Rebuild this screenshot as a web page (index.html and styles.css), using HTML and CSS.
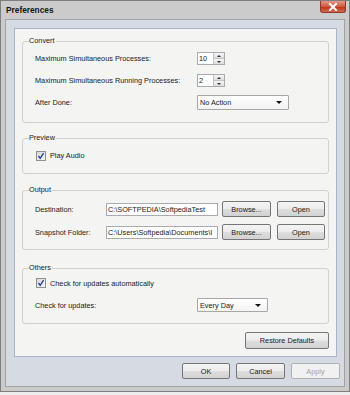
FILE: index.html
```html
<!DOCTYPE html>
<html lang="en">
<head>
    <meta charset="UTF-8">
    <title>Preferences</title>
    <link rel="stylesheet" href="styles.css">
</head>
<body>
    <div class="window">
        <div class="titlebar">
            <span class="title">Preferences</span>
            <span class="close-btn">
                <svg width="10" height="8" viewBox="0 0 10 8"><path d="M2 1 L8 7 M8 1 L2 7" stroke="#fff" stroke-width="2" stroke-linecap="square"/></svg>
            </span>
        </div>

        <div class="frame">
            <div class="panel">
                <fieldset class="group group-convert">
                    <legend>Convert</legend>
                    <div class="row">
                        <span class="label">Maximum Simultaneous Processes:</span>
                        <div class="spinbox">
                            <span class="spin-value">10</span>
                            <span class="spin-buttons">
                                <span class="spin-up"></span>
                                <span class="spin-down"></span>
                            </span>
                        </div>
                    </div>
                    <div class="row">
                        <span class="label">Maximum Simultaneous Running Processes:</span>
                        <div class="spinbox">
                            <span class="spin-value">2</span>
                            <span class="spin-buttons">
                                <span class="spin-up"></span>
                                <span class="spin-down"></span>
                            </span>
                        </div>
                    </div>
                    <div class="row">
                        <span class="label">After Done:</span>
                        <div class="select select-wide">
                            <span>No Action</span>
                            <span class="arrow"></span>
                        </div>
                    </div>
                </fieldset>

                <fieldset class="group group-preview">
                    <legend>Preview</legend>
                    <div class="row">
                        <span class="checkbox">
                            <svg width="8" height="8" viewBox="0 0 8 8"><path d="M1.5 4 L3.2 6.3 L6.6 1.2" fill="none" stroke="#2c3f9a" stroke-width="1.4"/></svg>
                        </span>
                        <span>Play Audio</span>
                    </div>
                </fieldset>

                <fieldset class="group group-output">
                    <legend>Output</legend>
                    <div class="row row-path">
                        <span class="label label-short">Destination:</span>
                        <div class="textbox">C:\SOFTPEDIA\SoftpediaTest</div>
                        <button class="btn btn-browse">Browse...</button>
                        <button class="btn btn-open">Open</button>
                    </div>
                    <div class="row row-path">
                        <span class="label label-short">Snapshot Folder:</span>
                        <div class="textbox">C:\Users\Softpedia\Documents\I</div>
                        <button class="btn btn-browse">Browse...</button>
                        <button class="btn btn-open">Open</button>
                    </div>
                </fieldset>

                <fieldset class="group group-others">
                    <legend>Others</legend>
                    <div class="row row-check">
                        <span class="checkbox">
                            <svg width="8" height="8" viewBox="0 0 8 8"><path d="M1.5 4 L3.2 6.3 L6.6 1.2" fill="none" stroke="#2c3f9a" stroke-width="1.4"/></svg>
                        </span>
                        <span>Check for updates automatically</span>
                    </div>
                    <div class="row row-path">
                        <span class="label">Check for updates:</span>
                        <div class="select select-small">
                            <span>Every Day</span>
                            <span class="arrow"></span>
                        </div>
                    </div>
                </fieldset>

                <div class="restore-row">
                    <button class="btn btn-restore">Restore Defaults</button>
                </div>
            </div>

            <div class="footer">
                <button class="btn btn-footer">OK</button>
                <button class="btn btn-footer">Cancel</button>
                <button class="btn btn-footer" disabled>Apply</button>
            </div>
        </div>
    </div>
</body>
</html>
```

FILE: styles.css
```css
body {
    margin: 0;
    background: #ededed;
    font-family: 'Liberation Sans', Arial, sans-serif;
    font-size: 7.3px;
    color: #1a1a1a;
}

.window {
    box-sizing: border-box;
    width: 350px;
    background: #cbcbcb;
    border: 1px solid #7e7e7e;
    padding: 0 4px 4px 4px;
}

.titlebar {
    height: 18px;
    display: flex;
    align-items: center;
}

.title {
    font-weight: bold;
    font-size: 8.3px;
    padding-left: 1px;
    color: #141414;
}

.close-btn {
    margin-left: auto;
    margin-right: -1px;
    align-self: flex-start;
    width: 24px;
    height: 11px;
    display: flex;
    align-items: center;
    justify-content: center;
    border: 1px solid #8c3b2b;
    border-top: none;
    border-radius: 0 0 3px 3px;
    background: linear-gradient(#e39a86, #cf5a40 50%, #b8361f 55%, #d36a4e);
}

.frame {
    background: #d6dae3;
    border: 1px solid #a3a3a3;
    padding: 8px 0 0 8px;
}

.panel {
    width: 307px;
    margin-right: 7px;
    background: #f4f4f2;
    border: 1px solid #aab4c8;
    padding: 7px;
}

/* group boxes */
.group {
    margin: 0;
    border: 1px solid #d0d1c9;
    border-radius: 3px;
    padding: 0 2px 0 6px;
}

.group legend {
    padding: 0 1px 0 0;
    line-height: 10px;
}

.group-convert {
    padding-top: 5px;
    padding-bottom: 12px;
}

.group-preview {
    margin-top: 10px;
    padding-top: 5px;
    padding-bottom: 10px;
}

.group-output {
    margin-top: 11px;
    padding-top: 6px;
    padding-bottom: 9px;
}

.group-others {
    margin-top: 13px;
    padding-top: 3px;
    padding-bottom: 10px;
}

.row {
    display: flex;
    align-items: center;
    height: 15px;
    padding-left: 6px;
}

.row + .row {
    margin-top: 7px;
}

.row-path {
    height: 16px;
}

.row-check {
    height: 14px;
}

.label {
    width: 162px;
    flex-shrink: 0;
}

.label-short {
    width: 71px;
}

/* spin box */
.spinbox {
    box-sizing: border-box;
    width: 28px;
    height: 13px;
    display: flex;
    background: #fff;
    border: 1px solid #a9abb0;
}

.spin-value {
    flex: 1;
    padding-left: 1px;
    line-height: 11px;
}

.spin-buttons {
    width: 11px;
    display: flex;
    flex-direction: column;
}

.spin-up,
.spin-down {
    flex: 1;
    display: flex;
    align-items: center;
    justify-content: center;
    background: linear-gradient(#f6f6f6, #dcdcdc);
    border-left: 1px solid #c4c4c4;
}

.spin-up {
    border-bottom: 1px solid #c4c4c4;
}

.spin-up::after,
.spin-down::after {
    content: '';
    border-left: 2px solid transparent;
    border-right: 2px solid transparent;
}

.spin-up::after {
    border-bottom: 2px solid #333;
}

.spin-down::after {
    border-top: 2px solid #333;
}

/* combo box */
.select {
    box-sizing: border-box;
    display: flex;
    align-items: center;
    justify-content: space-between;
    background: linear-gradient(#ffffff, #f3f3f3);
    border: 1px solid #a7a7a7;
    border-radius: 1px;
    padding: 0 6px 0 2px;
}

.select-wide {
    width: 92px;
    height: 15px;
}

.select-small {
    width: 71px;
    height: 14px;
}

.arrow {
    border-left: 3px solid transparent;
    border-right: 3px solid transparent;
    border-top: 3px solid #111;
}

/* check box */
.checkbox {
    box-sizing: border-box;
    width: 10px;
    height: 10px;
    margin-left: 1px;
    margin-right: 4px;
    display: flex;
    align-items: center;
    justify-content: center;
    border: 1px solid #8f9090;
    background: linear-gradient(135deg, #d8d8d8, #f7f7f7);
}

/* text box */
.textbox {
    box-sizing: border-box;
    width: 112px;
    height: 13px;
    line-height: 11px;
    padding-left: 1px;
    background: #fff;
    border: 1px solid #a9abb0;
    white-space: nowrap;
    overflow: hidden;
}

/* buttons */
.btn {
    box-sizing: border-box;
    height: 16px;
    padding: 0;
    font-family: 'Liberation Sans', Arial, sans-serif;
    font-size: 7.3px;
    color: #1a1a1a;
    border: 1px solid #767676;
    border-radius: 2px;
    background: linear-gradient(#f4f4f4, #ececec 48%, #dedede 52%, #d2d2d2);
}

.btn:disabled {
    color: #a3a3a3;
    border-color: #adb2b5;
    background: #f1f1f1;
}

.btn-browse {
    width: 49px;
    margin-left: 4px;
}

.btn-open {
    width: 48px;
    margin-left: 6px;
}

.restore-row {
    display: flex;
    justify-content: flex-end;
    margin-top: 8px;
}

.btn-restore {
    width: 84px;
    height: 17px;
}

.footer {
    display: flex;
    justify-content: flex-end;
    gap: 6px;
    padding: 6px 4px 7px 0;
}

.btn-footer {
    width: 49px;
}

.btn-footer:first-child {
    width: 48px;
}
```
